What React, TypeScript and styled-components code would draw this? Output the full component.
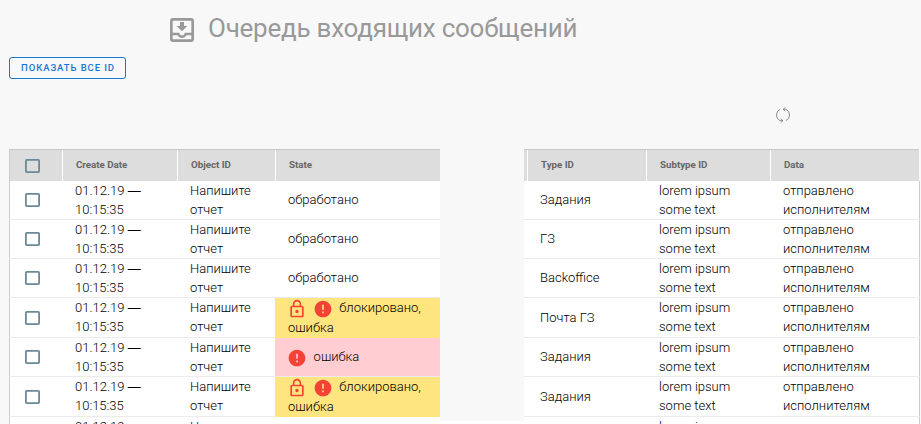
import React from "react";
import styled, { createGlobalStyle } from "styled-components";

const GlobalStyle = createGlobalStyle`
  * { box-sizing: border-box; }
  html, body { margin: 0; height: 424px; overflow: hidden; background: #f8f8f8; }
  body { font-family: Roboto, "Liberation Sans", sans-serif; color: #000; }
`;

const Page = styled.main`
  width: 921px;
  height: 424px;
  overflow: hidden;
  display: flex;
  flex-direction: column;
`;

const TitleBar = styled.header`
  display: flex;
  align-items: center;
  height: 57px;
  padding-left: 166px;
  color: #999;
`;

const TitleIcon = styled.svg`
  width: 32px;
  height: 32px;
  margin-top: 3px;
  fill: #999;
`;

const Title = styled.h1`
  margin: -2px 0 0 10px;
  font-size: 26px;
  line-height: 32px;
  font-weight: 400;
  letter-spacing: -0.24px;
  white-space: nowrap;
`;

const Actions = styled.div`
  display: flex;
  height: 22px;
  padding-left: 9px;
`;

const OutlineButton = styled.button`
  width: 117px;
  height: 22px;
  padding: 0 0 0 1px;
  border: 1px solid #1976d2;
  border-radius: 3px;
  background: transparent;
  color: #1976d2;
  font: 500 9.5px/20px Roboto, sans-serif;
  letter-spacing: 0.92px;
  text-transform: uppercase;
  white-space: nowrap;
`;

const Tools = styled.div`
  display: flex;
  justify-content: flex-end;
  height: 70px;
  padding: 28px 130px 0 0;
`;

const RefreshIcon = styled.svg`
  width: 16px;
  height: 16px;
  fill: none;
  stroke: #808080;
  stroke-width: 0.9;
`;

const Panels = styled.div`
  display: flex;
  flex: 1;
  min-height: 0;
`;

const Gap = styled.div`
  width: 84px;
  height: 272px;
`;

const LeftPanel = styled.section`
  width: 431px;
  margin-left: 9px;
`;

const RightPanel = styled.section`
  width: 396px;
`;

const Middle = styled.div`
  width: 84px;
  background: #fff;
  ${Gap} { background: #f8f8f8; }
`;

const Row = styled.div<{ $height: number; $columns: string; $side: "left" | "right" }>`
  display: grid;
  grid-template-columns: ${(p) => p.$columns};
  height: ${(p) => p.$height}px;
  background: #fff;
  border-bottom: 1px solid #ebebeb;
  box-shadow: ${(p) => (p.$side === "left" ? "inset 1px 0 #ccc" : "inset -1px 0 #ccc")};
`;

const HeadRow = styled.div<{ $columns: string; $side: "left" | "right" }>`
  display: grid;
  grid-template-columns: ${(p) => p.$columns};
  height: 32px;
  width: ${(p) => (p.$side === "left" ? "431px" : "395px")};
  background: #ddd;
  border-top: 1px solid #c8c8c8;
  box-shadow: ${(p) => (p.$side === "left" ? "inset 1px 0 #ccc" : "none")};
`;

const HeadCell = styled.div`
  padding-left: 13px;
  border-left: 1px solid #fff;
  color: #666;
  font-size: 9.75px;
  line-height: 30px;
  font-weight: 700;
  letter-spacing: -0.02px;
  white-space: nowrap;
`;

const CheckCell = styled.div<{ $top: number }>`
  padding: ${(p) => p.$top}px 0 0 16px;
`;

const CheckIcon = styled.svg`
  display: block;
  width: 15px;
  height: 14px;
  fill: none;
  stroke: #6b8998;
  stroke-width: 1.8;
`;

const Cell = styled.div<{ $top?: number }>`
  display: flex;
  align-items: flex-start;
  padding: ${(p) => p.$top ?? 0}px 0 0 13px;
  font-size: 13px;
  font-weight: 300;
  line-height: 19px;
  white-space: nowrap;
`;

const TwoLines = styled(Cell)`
  display: block;
`;

const Dash = styled.span`
  font-family: "Liberation Sans", sans-serif;
  line-height: 0;
`;

const tones = { plain: "transparent", blocked: "#ffe57f", error: "#ffcdd2" };

const StateCell = styled(Cell)<{ $tone: keyof typeof tones }>`
  background: ${(p) => tones[p.$tone]};
`;

const StateLine = styled.div`
  display: flex;
  align-items: flex-start;
  height: 20px;
`;

const StateIcon = styled.svg`
  flex: none;
  width: 20px;
  height: 20px;
  margin: 1px 6.2px 0 -0.6px;
  fill: #f44336;
`;

const Check = () => (
  <CheckIcon viewBox="0 0 15 14">
    <rect x="0.9" y="0.9" width="13.2" height="12.2" rx="0.8" />
  </CheckIcon>
);

const Lock = () => (
  <StateIcon viewBox="0 0 24 24">
    <path d="M12 17c1.1 0 2-.9 2-2s-.9-2-2-2-2 .9-2 2 .9 2 2 2zm6-9h-1V6c0-2.76-2.24-5-5-5S7 3.24 7 6v2H6c-1.1 0-2 .9-2 2v10c0 1.1.9 2 2 2h12c1.1 0 2-.9 2-2V10c0-1.1-.9-2-2-2zM8.9 6c0-1.71 1.39-3.1 3.1-3.1s3.1 1.39 3.1 3.1v2H8.9V6zM18 20H6V10h12v10z" />
  </StateIcon>
);

const ErrorMark = () => (
  <StateIcon viewBox="0 0 24 24">
    <path d="M12 2C6.48 2 2 6.48 2 12s4.48 10 10 10 10-4.48 10-10S17.52 2 12 2zm1 15h-2v-2h2v2zm0-4h-2V7h2v6z" />
  </StateIcon>
);

const State = ({ kind }: { kind: keyof typeof tones }) => {
  if (kind === "plain") return <StateCell $tone={kind} $top={9}>обработано</StateCell>;
  if (kind === "error")
    return (
      <StateCell $tone={kind} $top={9}>
        <ErrorMark />
        ошибка
      </StateCell>
    );
  return (
    <StateCell $tone={kind}>
      <div>
        <StateLine><Lock /><ErrorMark />блокировано,</StateLine>
        <StateLine>ошибка</StateLine>
      </div>
    </StateCell>
  );
};

const leftColumns = "53px 115px 98px 165px";
const rightColumns = "3px 119px 124px 1fr";

const rows: { height: number; check: number; state: keyof typeof tones; type: string }[] = [
  { height: 39, check: 12, state: "plain", type: "Задания" },
  { height: 39, check: 12, state: "plain", type: "ГЗ" },
  { height: 39, check: 12, state: "plain", type: "Backoffice" },
  { height: 40, check: 13, state: "blocked", type: "Почта ГЗ" },
  { height: 39, check: 12, state: "error", type: "Задания" },
  { height: 40, check: 13, state: "blocked", type: "Задания" },
  { height: 39, check: 12, state: "plain", type: "" },
];

export default function App() {
  return (
    <>
      <GlobalStyle />
      <Page>
        <TitleBar>
          <TitleIcon viewBox="0 0 24 24">
            <path d="M16 9h-2.5V6h-3v3H8l4 4 4-4zm3-6H4.99C3.88 3 3 3.9 3 5v14c0 1.1.88 2 1.99 2H19c1.1 0 2-.9 2-2V5c0-1.1-.9-2-2-2zm0 16H5v-3h3.56c.69 1.19 1.97 2 3.45 2s2.75-.81 3.45-2H19v3zm0-5h-4.99c0 1.1-.9 2-2 2s-2-.9-2-2H5V5h14v9z" />
          </TitleIcon>
          <Title>Очередь входящих сообщений</Title>
        </TitleBar>
        <Actions>
          <OutlineButton>Показать все ID</OutlineButton>
        </Actions>
        <Tools>
          <RefreshIcon viewBox="0 0 16 16">
            <path d="M5.2 13.7A6.2 6.2 0 0 1 5.2 2.3M10.8 2.3A6.2 6.2 0 0 1 10.8 13.7M10.2 0.6 8.2 2.3 10.2 4.3M8.2 2.3h2.8M5.8 15.4 7.8 13.7 5.8 11.7M7.8 13.7H5" />
          </RefreshIcon>
        </Tools>
        <Panels>
          <LeftPanel>
            <HeadRow $columns={leftColumns} $side="left">
              <CheckCell $top={9}><Check /></CheckCell>
              <HeadCell>Create Date</HeadCell>
              <HeadCell>Object ID</HeadCell>
              <HeadCell>State</HeadCell>
            </HeadRow>
            {rows.map((row, i) => (
              <Row key={i} $height={row.height} $columns={leftColumns} $side="left">
                <CheckCell $top={row.check}><Check /></CheckCell>
                <TwoLines>01.12.19 <Dash>—</Dash><br />10:15:35</TwoLines>
                <TwoLines>Напишите<br />отчет</TwoLines>
                <State kind={row.state} />
              </Row>
            ))}
          </LeftPanel>
          <Middle><Gap /></Middle>
          <RightPanel>
            <HeadRow $columns={rightColumns} $side="right">
              <span />
              <HeadCell>Type ID</HeadCell>
              <HeadCell>Subtype ID</HeadCell>
              <HeadCell>Data</HeadCell>
            </HeadRow>
            {rows.map((row, i) => (
              <Row key={i} $height={row.height} $columns={rightColumns} $side="right">
                <span />
                <Cell $top={row.check - 3}>{row.type}</Cell>
                <TwoLines>lorem ipsum<br />some text</TwoLines>
                <TwoLines>отправлено<br />исполнителям</TwoLines>
              </Row>
            ))}
          </RightPanel>
        </Panels>
      </Page>
    </>
  );
}
